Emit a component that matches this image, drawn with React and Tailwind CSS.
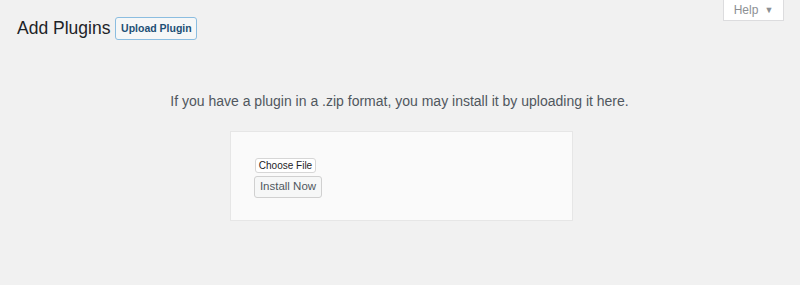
import React from 'react';

const App = () => {
  return (
    <div className="w-[800px] h-[285px] bg-[#f1f1f1] font-['Liberation_Sans',Arial,sans-serif] text-[#3c434a] overflow-hidden">
      {/* Help tab */}
      <div className="flex justify-end pr-[16px]">
        <button className="h-[21px] w-[61px] bg-white border border-t-0 border-[#dcdcde] text-[12px] text-[#8c8f94] flex items-center justify-center gap-[6px]">
          Help
          <span className="text-[9px] leading-none">▼</span>
        </button>
      </div>

      {/* Title row */}
      <div className="flex items-center gap-[5px] pl-[17px] -mt-[7px]">
        <h1 className="text-[17.5px] font-normal text-[#1d2327] leading-[28px]">Add Plugins</h1>
        <button className="h-[23px] w-[82px] border border-[#8bbde0] rounded-[3px] bg-[#f6f7f7] text-[10.5px] font-bold text-[#1d4f75] leading-none">
          Upload Plugin
        </button>
      </div>

      {/* Help text */}
      <p className="mt-[49px] text-center text-[14px] text-[#50575e] pr-[1px]">
        If you have a plugin in a .zip format, you may install it by uploading it here.
      </p>

      {/* Upload box */}
      <div className="mt-[19px] ml-[230px] w-[343px] h-[90px] bg-[#fafafa] border border-[#e6e6e6] pt-[26px] pl-[24px] flex flex-col items-start gap-[3px]">
        <button className="h-[15px] w-[61px] border border-[#d6d6d6] rounded-[3px] bg-white text-[10px] text-[#1d2327] leading-none">
          Choose File
        </button>
        <button className="h-[22px] w-[68px] -ml-[1px] border border-[#d0d0d0] rounded-[3px] bg-[#f6f7f7] text-[11.5px] text-[#50575e] leading-none">
          Install Now
        </button>
      </div>
    </div>
  );
};

export default App;
